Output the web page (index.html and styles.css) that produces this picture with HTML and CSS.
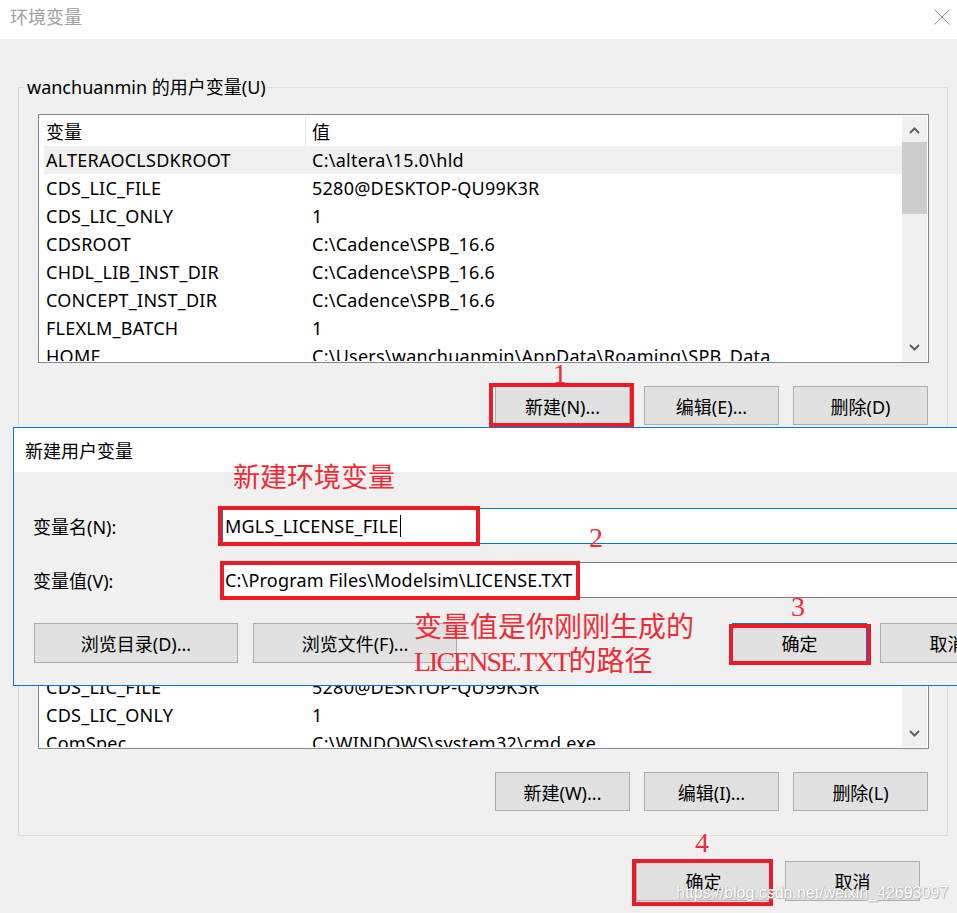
FILE: index.html
```html
<!DOCTYPE html>
<html lang="zh-CN">
<head>
    <meta charset="UTF-8">
    <title>环境变量</title>
    <link rel="stylesheet" href="styles.css">
</head>
<body>
    <div class="window">
        <div class="titlebar">
            <span class="title">环境变量</span>
            <svg class="close" width="16" height="16" viewBox="0 0 16 16">
                <path d="M0.5 0.5 L15.5 15.5 M15.5 0.5 L0.5 15.5" stroke="#8c8c8c" stroke-width="1" fill="none"/>
            </svg>
        </div>

        <fieldset class="group">
            <legend>wanchuanmin 的用户变量(U)</legend>

            <div class="listview list-user">
                <div class="lv-body">
                    <div class="lv-head">
                        <div class="col-name">变量</div>
                        <div class="col-value">值</div>
                    </div>
                    <div class="lv-row selected"><div class="col-name">ALTERAOCLSDKROOT</div><div class="col-value">C:\altera\15.0\hld</div></div>
                    <div class="lv-row"><div class="col-name">CDS_LIC_FILE</div><div class="col-value">5280@DESKTOP-QU99K3R</div></div>
                    <div class="lv-row"><div class="col-name">CDS_LIC_ONLY</div><div class="col-value">1</div></div>
                    <div class="lv-row"><div class="col-name">CDSROOT</div><div class="col-value">C:\Cadence\SPB_16.6</div></div>
                    <div class="lv-row"><div class="col-name">CHDL_LIB_INST_DIR</div><div class="col-value">C:\Cadence\SPB_16.6</div></div>
                    <div class="lv-row"><div class="col-name">CONCEPT_INST_DIR</div><div class="col-value">C:\Cadence\SPB_16.6</div></div>
                    <div class="lv-row"><div class="col-name">FLEXLM_BATCH</div><div class="col-value">1</div></div>
                    <div class="lv-row"><div class="col-name">HOME</div><div class="col-value">C:\Users\wanchuanmin\AppData\Roaming\SPB_Data</div></div>
                </div>
                <div class="vscroll">
                    <div class="sb-arrow up">
                        <svg width="11" height="7" viewBox="0 0 11 7"><polyline points="1,6 5.5,1.5 10,6" fill="none" stroke="#606060" stroke-width="2"/></svg>
                    </div>
                    <div class="sb-track"><div class="sb-thumb"></div></div>
                    <div class="sb-arrow down">
                        <svg width="11" height="7" viewBox="0 0 11 7"><polyline points="1,1 5.5,5.5 10,1" fill="none" stroke="#606060" stroke-width="2"/></svg>
                    </div>
                </div>
            </div>

            <div class="btn-row">
                <button class="btn">新建(N)...</button>
                <button class="btn">编辑(E)...</button>
                <button class="btn">删除(D)</button>
            </div>

            <div class="listview list-system">
                <div class="lv-body">
                    <div class="lv-head">
                        <div class="col-name">变量</div>
                        <div class="col-value">值</div>
                    </div>
                    <div class="lv-row"><div class="col-name">ALTERAOCLSDKROOT</div><div class="col-value">C:\altera\15.0\hld</div></div>
                    <div class="lv-row"><div class="col-name">AMDAPPSDKROOT</div><div class="col-value">C:\Program Files (x86)\AMD APP\</div></div>
                    <div class="lv-row"><div class="col-name">asl.log</div><div class="col-value">Destination=file</div></div>
                    <div class="lv-row"><div class="col-name">CDS_AUTO_64BIT</div><div class="col-value">ALL</div></div>
                    <div class="lv-row"><div class="col-name">CDS_CONCEPT_NOSPLASH</div><div class="col-value">TRUE</div></div>
                    <div class="lv-row"><div class="col-name">CDS_INST_DIR</div><div class="col-value">C:\Cadence\SPB_16.6</div></div>
                    <div class="lv-row"><div class="col-name">CDS_LIC_DIR</div><div class="col-value">C:\Cadence\SPB_16.6\share\license</div></div>
                    <div class="lv-row"><div class="col-name">CDS_LIC_FILE</div><div class="col-value">5280@DESKTOP-QU99K3R</div></div>
                    <div class="lv-row"><div class="col-name">CDS_LIC_ONLY</div><div class="col-value">1</div></div>
                    <div class="lv-row"><div class="col-name">ComSpec</div><div class="col-value">C:\WINDOWS\system32\cmd.exe</div></div>
                </div>
                <div class="vscroll">
                    <div class="sb-arrow up">
                        <svg width="11" height="7" viewBox="0 0 11 7"><polyline points="1,6 5.5,1.5 10,6" fill="none" stroke="#606060" stroke-width="2"/></svg>
                    </div>
                    <div class="sb-track"><div class="sb-thumb"></div></div>
                    <div class="sb-arrow down">
                        <svg width="11" height="7" viewBox="0 0 11 7"><polyline points="1,1 5.5,5.5 10,1" fill="none" stroke="#606060" stroke-width="2"/></svg>
                    </div>
                </div>
            </div>

            <div class="btn-row">
                <button class="btn">新建(W)...</button>
                <button class="btn">编辑(I)...</button>
                <button class="btn">删除(L)</button>
            </div>
        </fieldset>

        <div class="dialog-buttons">
            <button class="btn tall">确定</button>
            <button class="btn tall">取消</button>
        </div>

        <!-- child dialog on top of the main window -->
        <div class="child">
            <div class="child-title">新建用户变量</div>
            <div class="child-body">
                <div class="field">
                    <label>变量名(N):</label>
                    <div class="input focus">MGLS_LICENSE_FILE<span class="caret"></span></div>
                </div>
                <div class="field">
                    <label>变量值(V):</label>
                    <div class="input">C:\Program Files\Modelsim\LICENSE.TXT</div>
                </div>
                <div class="child-buttons">
                    <button class="btn wide">浏览目录(D)...</button>
                    <button class="btn wide">浏览文件(F)...</button>
                    <div class="right-group">
                        <button class="btn tall default">确定</button>
                        <button class="btn tall">取消</button>
                    </div>
                </div>
            </div>
        </div>

        <!-- red annotations -->
        <div class="mark mark-new"></div>
        <div class="mark mark-name"></div>
        <div class="mark mark-value"></div>
        <div class="mark mark-ok"></div>
        <div class="mark mark-ok-main"></div>

        <div class="step step-1">1</div>
        <div class="step step-2">2</div>
        <div class="step step-3">3</div>
        <div class="step step-4">4</div>

        <div class="note note-new">新建环境变量</div>
        <div class="note note-value">变量值是你刚刚生成的<br><span class="latin">LICENSE.TXT</span>的路径</div>

        <div class="watermark">https://blog.csdn.net/weixin_42693097</div>
    </div>
</body>
</html>
```

FILE: styles.css
```css
* {
    box-sizing: border-box;
}

html, body {
    margin: 0;
}

body {
    width: 957px;
    height: 913px;
    overflow: hidden;
    background: #f0f0f0;
    font-family: "Noto Sans", "Noto Sans CJK SC", sans-serif;
    font-size: 18px;
    color: #000;
}

.window {
    position: relative;
    width: 957px;
    height: 913px;
    overflow: hidden;
}

/* title bar */
.titlebar {
    height: 39px;
    background: #fff;
    display: flex;
    align-items: flex-start;
    justify-content: space-between;
    padding: 4px 7px 0 10px;
}

.title {
    color: #a0a0a0;
    line-height: 26px;
}

.close {
    margin-top: 5px;
}

/* group box */
.group {
    width: 930px;
    margin: 36px 0 0 18px;
    padding: 15px 18px 24px 19px;
    border: 1px solid #dcdcdc;
    min-width: 0;
}

.group legend {
    margin-left: -13px;
    padding: 0 2px;
    line-height: 24px;
}

/* list view */
.listview {
    display: flex;
    border: 1px solid #828790;
    padding: 1px;
    background: #fff;
}

.list-user {
    height: 249px;
}

.list-system {
    height: 302px;
    margin-top: 22px;
}

.lv-body {
    flex: 1;
    overflow: hidden;
}

.lv-head {
    display: flex;
    height: 30px;
    align-items: center;
    padding-left: 6px;
}

.list-system .lv-head {
    height: 28px;
}

.lv-head .col-name {
    width: 260px;
    height: 100%;
    display: flex;
    align-items: center;
    border-right: 1px solid #e5e5e5;
}

.lv-head .col-value {
    padding-left: 6px;
}

.lv-row {
    display: flex;
    align-items: center;
    height: 28px;
    margin-left: 4px;
    padding-left: 2px;
    white-space: nowrap;
    letter-spacing: 0.25px;
}

.lv-row.selected {
    background: #f0f0f0;
}

.lv-row .col-name {
    width: 266px;
}

/* scrollbar */
.vscroll {
    width: 25px;
    background: #f0f0f0;
    display: flex;
    flex-direction: column;
}

.sb-arrow {
    height: 26px;
    display: flex;
    justify-content: center;
    align-items: center;
}

.sb-arrow.up {
    padding-top: 3px;
}

.sb-arrow.down {
    padding-bottom: 2px;
}

.sb-track {
    flex: 1;
}

.sb-thumb {
    height: 72px;
    background: #cdcdcd;
}

/* buttons */
.btn {
    width: 135px;
    height: 39px;
    padding: 0;
    background: #e1e1e1;
    border: 1px solid #adadad;
    font-family: inherit;
    font-size: 18px;
    color: #000;
}

.btn.tall {
    height: 40px;
}

.btn.wide {
    width: 204px;
    height: 40px;
}

.btn.default {
    border-color: #0078d7;
}

.btn-row {
    display: flex;
    justify-content: flex-end;
    gap: 14px;
    margin-top: 23px;
    padding-right: 1px;
}

.dialog-buttons {
    display: flex;
    justify-content: flex-end;
    gap: 14px;
    margin-top: 25px;
    padding-right: 37px;
}

/* child dialog */
.child {
    position: absolute;
    left: 13px;
    top: 427px;
    width: 1020px;
    border: 1px solid #0078d7;
    background: #f0f0f0;
}

.child-title {
    height: 44px;
    background: #fff;
    padding-left: 11px;
    display: flex;
    align-items: center;
}

.child-body {
    padding: 36px 17px 22px 19px;
}

.field {
    display: flex;
    align-items: center;
}

.field + .field {
    margin-top: 18px;
}

.field label {
    width: 189px;
}

.input {
    flex: 1;
    height: 36px;
    border: 1px solid #7a7a7a;
    background: #fff;
    padding-left: 2px;
    display: flex;
    align-items: center;
    white-space: nowrap;
    letter-spacing: 0.2px;
}

.input.focus {
    border-color: #0078d7;
}

.caret {
    display: inline-block;
    width: 1px;
    height: 22px;
    margin-left: 1px;
    background: #000;
}

.child-buttons {
    display: flex;
    gap: 15px;
    margin-top: 25px;
    padding-left: 1px;
}

.right-group {
    display: flex;
    gap: 13px;
    margin-left: auto;
}

/* annotations */
.mark {
    position: absolute;
    border: 4px solid #ed1c24;
}

.mark-new {
    left: 489px;
    top: 383px;
    width: 145px;
    height: 44px;
}

.mark-name {
    left: 218px;
    top: 506px;
    width: 262px;
    height: 40px;
}

.mark-value {
    left: 220px;
    top: 561px;
    width: 360px;
    height: 39px;
}

.mark-ok {
    left: 729px;
    top: 624px;
    width: 142px;
    height: 41px;
}

.mark-ok-main {
    left: 632px;
    top: 859px;
    width: 141px;
    height: 47px;
}

.step {
    position: absolute;
    font-family: "Liberation Serif", serif;
    font-size: 28px;
    line-height: 28px;
    color: #ef2b36;
}

.step-1 { left: 553px; top: 360px; }
.step-2 { left: 589px; top: 524px; }
.step-3 { left: 791px; top: 593px; }
.step-4 { left: 695px; top: 829px; }

.note {
    position: absolute;
    font-family: "Noto Sans CJK SC", sans-serif;
    font-size: 27px;
    color: #ef2b36;
    white-space: nowrap;
}

.note-new {
    left: 233px;
    top: 460px;
    line-height: 32px;
}

.note-value {
    left: 414px;
    top: 608px;
    font-size: 28px;
    line-height: 34px;
}

.note-value .latin {
    font-family: "Liberation Serif", serif;
    letter-spacing: -2px;
}

.watermark {
    position: absolute;
    left: 676px;
    top: 883px;
    font-family: "Liberation Sans", sans-serif;
    font-size: 16px;
    line-height: 20px;
    color: #fff;
    text-shadow: 0 0 1px #9a9a9a, 1px 1px 1px #b5b5b5;
}
```
